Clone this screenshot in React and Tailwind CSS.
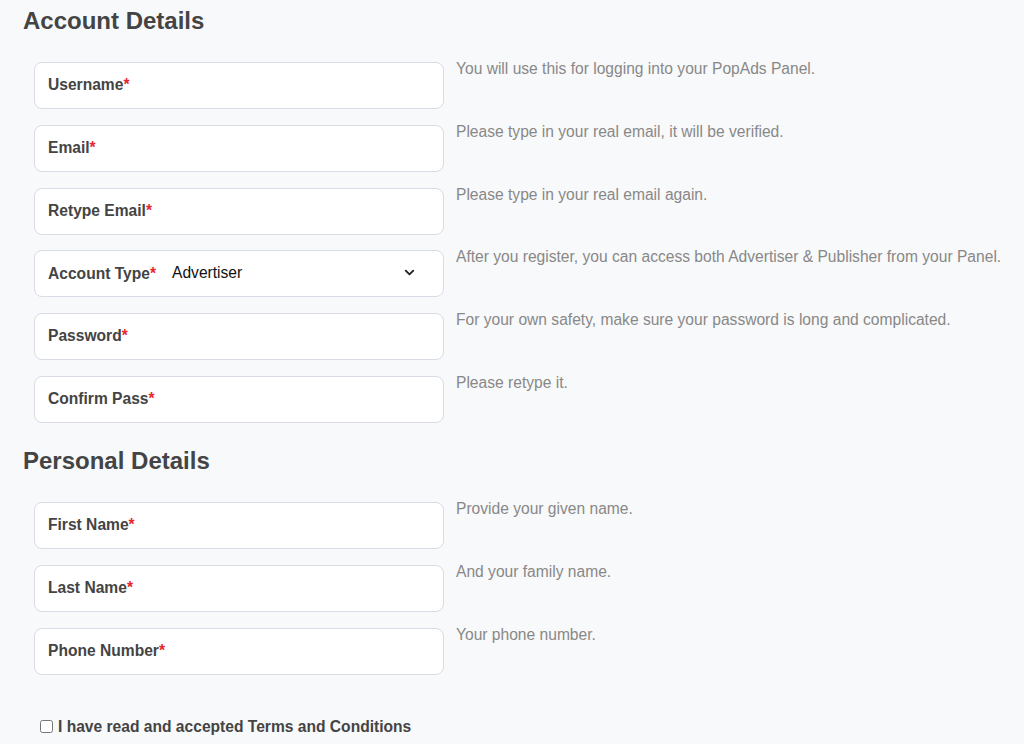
import { ChevronDown } from "lucide-react";

const accountFields = [
  { label: "Username", help: "You will use this for logging into your PopAds Panel." },
  { label: "Email", help: "Please type in your real email, it will be verified." },
  { label: "Retype Email", help: "Please type in your real email again." },
  { label: "Account Type", help: "After you register, you can access both Advertiser & Publisher from your Panel.", select: "Advertiser" },
  { label: "Password", help: "For your own safety, make sure your password is long and complicated." },
  { label: "Confirm Pass", help: "Please retype it." },
];

const personalFields = [
  { label: "First Name", help: "Provide your given name." },
  { label: "Last Name", help: "And your family name." },
  { label: "Phone Number", help: "Your phone number." },
];

const FieldRow = ({ field }) => (
  <div className="flex items-start">
    <div className="ml-[11px] flex h-[47px] w-[410px] shrink-0 items-center rounded-[8px] border border-[#d9dce6] bg-white pl-[13px] pr-[26px]">
      <span className="-mt-[1px] text-[15.6px] font-bold text-[#444]">
        {field.label}
        <span className="text-[#e8262d]">*</span>
      </span>
      {field.select && (
        <div className="ml-[16px] flex flex-1 items-center justify-between -mt-[3px]">
          <span className="text-[15.6px] text-[#111]">{field.select}</span>
          <ChevronDown className="h-[15px] w-[15px] text-[#222]" strokeWidth={3} />
        </div>
      )}
    </div>
    <p className="ml-[12px] -mt-[3px] text-[15.6px] leading-[20px] text-[#888] whitespace-nowrap">{field.help}</p>
  </div>
);

export default function App() {
  return (
    <div className="min-h-screen bg-[#f8f9fa] pl-[23px] pt-[7px] font-['Liberation_Sans',Arial,sans-serif]">
      <h2 className="text-[24px] leading-[28px] font-bold text-[#444]">Account Details</h2>
      <div className="mt-[27px] flex flex-col gap-[15.8px]">
        {accountFields.map((f) => (
          <FieldRow key={f.label} field={f} />
        ))}
      </div>

      <h2 className="mt-[24px] text-[24px] leading-[28px] font-bold text-[#444]">Personal Details</h2>
      <div className="mt-[27px] flex flex-col gap-[15.8px]">
        {personalFields.map((f) => (
          <FieldRow key={f.label} field={f} />
        ))}
      </div>

      <label className="mt-[42px] ml-[17px] flex items-center gap-[5px] pb-4">
        <input type="checkbox" className="h-[13px] w-[13px] m-0" />
        <span className="text-[15.6px] leading-[20px] font-bold text-[#444]">I have read and accepted Terms and Conditions</span>
      </label>
    </div>
  );
}
